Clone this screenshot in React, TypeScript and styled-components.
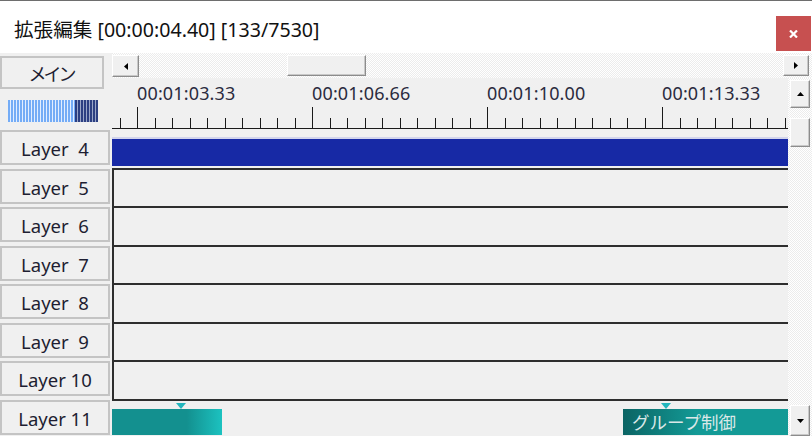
import React from "react";
import styled, { createGlobalStyle } from "styled-components";

const UI_FONT = `"Noto Sans", "Noto Sans CJK JP", sans-serif`;
const HATCH = `repeating-conic-gradient(#ffffff 0 25%, #ececec 0 50%) 0 0 / 2px 2px`;

const GlobalStyle = createGlobalStyle`
  html, body {
    margin: 0;
    padding: 0;
    background: #fff;
  }
  body {
    font-family: ${UI_FONT};
  }
`;

// Window chrome
const Window = styled.div`
  width: 812px;
  height: 436px;
  display: flex;
  flex-direction: column;
  overflow: hidden;
  background: #f0f0f0;
`;

const TitleBar = styled.header`
  flex: none;
  height: 53px;
  box-sizing: border-box;
  border-top: 1px solid #6e6e6e;
  background: #fff;
  display: flex;
  align-items: center;
  justify-content: space-between;
  padding-left: 14px;
`;

const Title = styled.h1`
  margin: 2px 0 0;
  font-family: ${UI_FONT};
  font-weight: 400;
  font-size: 19.6px;
  color: #111;
`;

const CloseButton = styled.button`
  align-self: flex-end;
  width: 35px;
  height: 35px;
  margin: 0 1px 2px 0;
  padding: 0;
  border: none;
  background: #c75050;
  display: flex;
  align-items: center;
  justify-content: center;
`;

// Editor grid
const Editor = styled.div`
  flex: 1;
  min-height: 0;
  display: grid;
  grid-template-columns: 112px 1fr 24px;
  grid-template-rows: 25px 51px 1fr;
`;

const SideHeader = styled.div`
  grid-column: 1;
  grid-row: 1 / 3;
  padding-top: 3px;
`;

const Button3D = styled.div`
  box-sizing: border-box;
  border: 2px solid #c4c4c4;
  background: #f0f0f0;
  display: flex;
  align-items: center;
  justify-content: center;
  font-family: ${UI_FONT};
  color: #1e1e32;
`;

const SceneButton = styled(Button3D)`
  width: 104px;
  height: 33px;
  font-size: 18px;
  letter-spacing: -3px;
  padding-right: 2px;
`;

const Meter = styled.div`
  margin: 11px 0 0 8px;
  width: 90px;
  height: 22px;
  display: flex;
`;

const MeterPart = styled.div<{ $dark?: boolean }>`
  height: 100%;
  background: ${(p) =>
    p.$dark
      ? "repeating-linear-gradient(90deg, #2c3f82 0 2px, #9aa6c8 2px 3px)"
      : "repeating-linear-gradient(90deg, #74acf6 0 2px, #e2eeff 2px 3px)"};
`;

// Scrollbars
const HScroll = styled.div`
  grid-column: 2 / 4;
  grid-row: 1;
  display: flex;
  align-items: flex-start;
  padding: 2px 3px 0 0;
  background: ${HATCH};
`;

const ScrollButton = styled.div<{ $w: number; $h: number }>`
  flex: none;
  box-sizing: border-box;
  width: ${(p) => p.$w}px;
  height: ${(p) => p.$h}px;
  background: #f0f0f0;
  border: 1px solid;
  border-color: #ffffff #8c8c8c #8c8c8c #ffffff;
  box-shadow: inset -1px -1px 0 #c8c8c8;
  display: flex;
  align-items: center;
  justify-content: center;
`;

const ScrollTrack = styled.div`
  position: relative;
  flex: 1;
  align-self: stretch;
`;

const Thumb = styled.div`
  position: absolute;
  box-sizing: border-box;
  background: #f0f0f0;
  border: 1px solid;
  border-color: #ffffff #8c8c8c #8c8c8c #ffffff;
  box-shadow: inset -1px -1px 0 #c8c8c8;
`;

const HThumb = styled(Thumb)`
  left: 148px;
  top: 0;
  width: 79px;
  height: 21px;
`;

const VScroll = styled.div`
  grid-column: 3;
  grid-row: 2 / 4;
  display: flex;
  flex-direction: column;
  align-items: flex-start;
  padding: 2px 0 0 2px;
  background: ${HATCH};
  overflow: hidden;
`;

const VThumb = styled(Thumb)`
  left: 0;
  top: 10px;
  width: 20px;
  height: 29px;
`;

const VTrack = styled.div`
  position: relative;
  flex: 1;
  align-self: stretch;
`;

// Ruler
const Ruler = styled.div`
  grid-column: 2;
  grid-row: 2;
  position: relative;
  background: #f0f0f0;
`;

const RulerLabel = styled.span`
  position: absolute;
  top: 4px;
  font-family: ${UI_FONT};
  font-size: 18px;
  letter-spacing: 0.15px;
  line-height: 22px;
  color: #2b2b3e;
  white-space: nowrap;
`;

// Layers
const Layers = styled.div`
  grid-column: 1 / 3;
  grid-row: 3;
  display: flex;
  flex-direction: column;
  overflow: hidden;
`;

const LayerRow = styled.div`
  flex: none;
  height: 38.5px;
  display: flex;
`;

const LayerButton = styled(Button3D)`
  flex: none;
  width: 110px;
  height: 35px;
  margin: 1px 2px 0 0;
  padding-top: 2px;
  font-size: 18.5px;
  white-space: pre;
`;

const Track = styled.div<{ $edge: "none" | "top" | "both" }>`
  position: relative;
  flex: 1;
  box-shadow: ${(p) =>
    p.$edge === "both"
      ? "inset 2px 2px 0 #2e2e2e"
      : p.$edge === "top"
      ? "inset 0 2px 0 #2e2e2e"
      : "none"};
`;

const Clip = styled.div<{ $kind: "media" | "teal" | "group" }>`
  position: absolute;
  top: 10px;
  bottom: 2px;
  box-sizing: border-box;
  display: flex;
  align-items: center;
  padding-left: 9px;
  font-family: ${UI_FONT};
  font-size: 17.5px;
  color: #dae8e8;
  white-space: nowrap;
  overflow: hidden;
  background: ${(p) =>
    p.$kind === "media"
      ? "#1729a5"
      : p.$kind === "teal"
      ? "linear-gradient(90deg, #13908f 0, #13908f 68%, #1cc2c0 100%)"
      : "linear-gradient(90deg, #0b6464 0, #139a96 45%, #139a96 100%)"};
  box-shadow: ${(p) => (p.$kind === "media" ? "0 -2px 0 #d2d4ec" : "none")};
`;

const Marker = styled.div`
  position: absolute;
  top: 4px;
  width: 0;
  height: 0;
  margin-left: -5px;
  border-left: 5px solid transparent;
  border-right: 5px solid transparent;
  border-top: 6px solid #22b6bd;
`;

const Arrow = ({ dir }: { dir: "left" | "right" | "up" | "down" }) => {
  const pts = {
    left: "4,0 4,7 0,3.5",
    right: "0,0 0,7 4,3.5",
    up: "0,4 7,4 3.5,0",
    down: "0,0 7,0 3.5,4",
  }[dir];
  const horiz = dir === "left" || dir === "right";
  return (
    <svg width={horiz ? 4 : 7} height={horiz ? 7 : 4} viewBox={horiz ? "0 0 4 7" : "0 0 7 4"}>
      <polygon points={pts} fill="#000" />
    </svg>
  );
};

const RULER_WIDTH = 676;
const MAJOR_X = 25;
const STEP = 17.5;
const rulerLabels = ["00:01:03.33", "00:01:06.66", "00:01:10.00", "00:01:13.33"];

const RulerTicks = () => {
  const ticks: React.ReactNode[] = [];
  for (let i = 0; MAJOR_X - STEP + i * STEP < RULER_WIDTH; i++) {
    const x = Math.round(MAJOR_X - STEP + i * STEP) + 0.5;
    const major = (i - 1) % 10 === 0;
    ticks.push(<line key={i} x1={x} x2={x} y1={major ? 29 : 40} y2={50} stroke="#1a1a1a" strokeWidth={1} />);
  }
  return (
    <svg width={RULER_WIDTH} height={51} style={{ position: "absolute", left: 0, top: 0 }}>
      {ticks}
      <line x1={0} x2={RULER_WIDTH} y1={50.5} y2={50.5} stroke="#1a1a1a" strokeWidth={1} />
    </svg>
  );
};

const layers = [4, 5, 6, 7, 8, 9, 10, 11];

export default function App() {
  return (
    <>
      <GlobalStyle />
      <Window>
        <TitleBar>
          <Title>拡張編集 [00:00:04.40] [133/7530]</Title>
          <CloseButton aria-label="close">
            <svg width="9" height="8" viewBox="0 0 9 8">
              <path d="M1 0.5 L8 7.5 M8 0.5 L1 7.5" stroke="#fff" strokeWidth="2.2" />
            </svg>
          </CloseButton>
        </TitleBar>
        <Editor>
          <SideHeader>
            <SceneButton>メイン</SceneButton>
            <Meter>
              <MeterPart style={{ width: 67 }} />
              <MeterPart $dark style={{ width: 23 }} />
            </Meter>
          </SideHeader>

          <HScroll>
            <ScrollButton $w={27} $h={22}>
              <Arrow dir="left" />
            </ScrollButton>
            <ScrollTrack>
              <HThumb />
            </ScrollTrack>
            <ScrollButton $w={26} $h={21}>
              <Arrow dir="right" />
            </ScrollButton>
          </HScroll>

          <Ruler>
            <RulerTicks />
            {rulerLabels.map((t, k) => (
              <RulerLabel key={t} style={{ left: MAJOR_X + k * 175 }}>
                {t}
              </RulerLabel>
            ))}
          </Ruler>

          <VScroll>
            <ScrollButton $w={20} $h={28}>
              <Arrow dir="up" />
            </ScrollButton>
            <VTrack>
              <VThumb />
            </VTrack>
            <ScrollButton $w={20} $h={31}>
              <Arrow dir="down" />
            </ScrollButton>
          </VScroll>

          <Layers>
            {layers.map((n) => (
              <LayerRow key={n}>
                <LayerButton>{`Layer ${n < 10 ? " " : ""}${n}`}</LayerButton>
                {n === 4 ? (
                  <Track $edge="none">
                    <Clip $kind="media" style={{ left: 0, right: 0 }} />
                  </Track>
                ) : n === 11 ? (
                  <Track $edge="top">
                    <Clip $kind="teal" style={{ left: 0, width: 110 }} />
                    <Marker style={{ left: 69 }} />
                    <Clip $kind="group" style={{ left: 511, width: 165 }}>
                      グループ制御
                    </Clip>
                    <Marker style={{ left: 554 }} />
                  </Track>
                ) : (
                  <Track $edge="both" />
                )}
              </LayerRow>
            ))}
          </Layers>
        </Editor>
      </Window>
    </>
  );
}
